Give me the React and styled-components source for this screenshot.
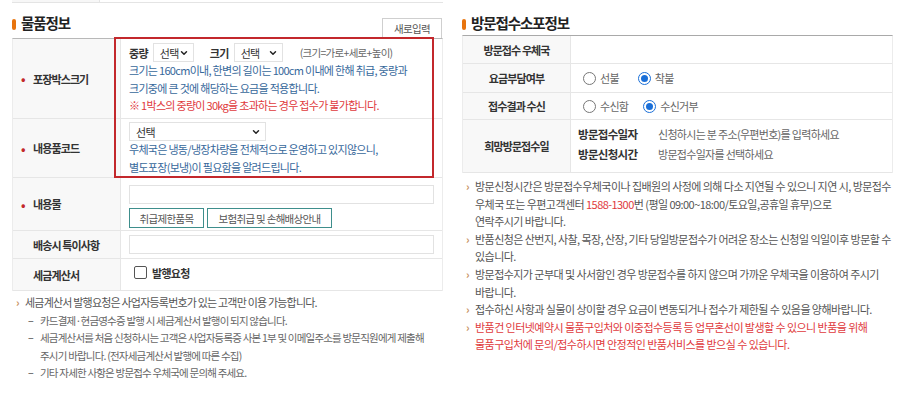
import React from "react";
import styled, { createGlobalStyle } from "styled-components";
import { ChevronDown } from "lucide-react";

const GlobalStyle = createGlobalStyle`
  body {
    margin: 0;
    background: #fff;
    font-family: "Noto Sans CJK KR", "Noto Sans", sans-serif;
    color: #444;
  }
`;

const Page = styled.div`
  width: 906px;
  height: 398px;
  box-sizing: border-box;
  padding: 0 13px 0 12px;
  display: flex;
  gap: 19px;
  overflow: hidden;
`;

const Panel = styled.section`
  width: 431px;
  display: flex;
  flex-direction: column;
`;

const PrevEdge = styled.div`
  height: 2px;
  display: grid;
  grid-template-columns: 88px 1fr;
  border-bottom: 1px solid #e4e4e4;

  span:first-child {
    background: #f7f7f7;
    border-right: 1px solid #e4e4e4;
  }
`;

const Header = styled.div`
  display: flex;
  justify-content: space-between;
  align-items: flex-end;
  margin-top: ${p => p.$top}px;
  height: ${p => p.$height}px;
`;

const Title = styled.h2`
  margin: 0;
  align-self: flex-start;
  display: flex;
  align-items: center;
  font-size: 14.5px;
  font-weight: 700;
  letter-spacing: -1.1px;
  color: #222;
  line-height: 18px;

  &::before {
    content: "";
    width: 4px;
    height: 11px;
    border-radius: 2px;
    background: #e8740e;
    margin-right: 5px;
    margin-top: 2px;
  }
`;

const ResetButton = styled.button`
  width: 60px;
  height: 20px;
  border: 1px solid #cfcfcf;
  border-bottom: none;
  background: #fff;
  font-family: inherit;
  font-size: 10.5px;
  letter-spacing: -0.6px;
  color: #555;
  padding: 0;
  margin-right: 1px;
`;

const Table = styled.div`
  position: relative;
  border-top: 1px solid ${p => p.$topColor || "#a9a9a9"};
  border-left: 1px solid #ececec;
  border-right: 1px solid #ececec;
`;

const Row = styled.div`
  display: grid;
  grid-template-columns: 108px 1fr;
  min-height: ${p => p.$h}px;
  border-bottom: 1px solid #e6e6e6;
  box-sizing: border-box;
`;

const Label = styled.div`
  background: #f8f8f8;
  border-right: 1px solid #e6e6e6;
  display: flex;
  align-items: center;
  justify-content: ${p => (p.$center ? "center" : "flex-start")};
  padding-left: ${p => (p.$center ? 0 : 20)}px;
  font-size: 11px;
  font-weight: 700;
  letter-spacing: -0.9px;
  color: #333;
  position: relative;

  &::before {
    content: ${p => (p.$required ? '"•"' : "none")};
    position: absolute;
    left: 8px;
    color: #c3282c;
    font-size: 12px;
  }
`;

const Cell = styled.div`
  padding: ${p => p.$pad || "0 8px"};
  display: flex;
  flex-direction: column;
  justify-content: ${p => p.$justify || "flex-start"};
  font-size: 11px;
  letter-spacing: -0.7px;
`;

const Highlight = styled.div`
  position: absolute;
  left: 101px;
  top: -2px;
  width: 320px;
  height: 141px;
  border: 2px solid #c3282c;
  box-sizing: border-box;
  pointer-events: none;
`;

const Inline = styled.div`
  display: flex;
  align-items: center;
  gap: ${p => p.$gap || 0}px;
  margin-top: ${p => p.$top || 0}px;
`;

const FieldName = styled.span`
  font-weight: 700;
  color: #333;
  margin: 0 5px 0 ${p => p.$left || 0}px;
`;

const SelectBox = styled.div`
  width: ${p => p.$w}px;
  height: 19px;
  box-sizing: border-box;
  border: 1px solid #e2e2e2;
  padding: 0 4px 0 6px;
  display: flex;
  align-items: center;
  justify-content: space-between;
  color: #333;
  font-size: 11px;
  background: #fff;
`;

const Hint = styled.span`
  margin-left: 17px;
  color: #666;
  font-size: 10.5px;
`;

const Text = styled.p`
  margin: 0;
  line-height: 17.5px;
  color: ${p => (p.$red ? "#e0393c" : p.$blue ? "#37689b" : "#555")};
  white-space: nowrap;
`;

const Input = styled.div`
  width: 305px;
  height: 19px;
  box-sizing: border-box;
  border: 1px solid #e2e2e2;
  background: #fff;
`;

const OutlineButton = styled.button`
  width: ${p => p.$w}px;
  height: 20px;
  padding: 0;
  border: 1px solid #3e8e8c;
  background: #fff;
  color: #555;
  font-family: inherit;
  font-size: 10.5px;
  letter-spacing: -0.7px;
`;

const Checkbox = styled.span`
  width: 11px;
  height: 11px;
  border: 1px solid #555;
  border-radius: 2px;
  margin: 0 5px;
`;

const Strong = styled.span`
  font-weight: 700;
  color: #333;
`;

const RadioWrap = styled.label`
  display: inline-flex;
  align-items: center;
  margin-right: ${p => p.$mr}px;
  color: #666;
  font-size: 11px;
`;

const RadioCircle = styled.span`
  width: 11px;
  height: 11px;
  border-radius: 50%;
  border: 1px solid ${p => (p.$on ? "#1a6fd8" : "#777")};
  margin-right: 4px;
  display: flex;
  align-items: center;
  justify-content: center;

  &::after {
    content: "";
    width: 7px;
    height: 7px;
    border-radius: 50%;
    background: ${p => (p.$on ? "#1a6fd8" : "transparent")};
  }
`;

const Radio = ({ on, mr, children }) => (
  <RadioWrap $mr={mr}>
    <RadioCircle $on={on} />
    {children}
  </RadioWrap>
);

const VisitGrid = styled.div`
  display: grid;
  grid-template-columns: 80px 1fr;
  row-gap: 2px;
  line-height: 18px;

  span:nth-child(odd) {
    font-weight: 700;
    color: #333;
    font-size: 11.5px;
  }
  span:nth-child(even) {
    color: #666;
  }
`;

const Notes = styled.ul`
  list-style: none;
  margin: ${p => p.$top}px 0 0;
  padding: 0;
  font-size: 11px;
  letter-spacing: ${p => p.$spacing || -0.8}px;
  line-height: 17.6px;
  color: #555;
`;

const Note = styled.li`
  position: relative;
  padding-left: ${p => (p.$sub ? 28 : 13)}px;
  font-size: ${p => (p.$sub ? 10.5 : 11)}px;
  color: ${p => (p.$red ? "#e0393c" : p.$sub ? "#666" : "#555")};
  white-space: nowrap;

  &::before {
    content: "${p => (p.$sub ? "–" : "›")}";
    position: absolute;
    left: ${p => (p.$sub ? 16 : 4)}px;
    color: ${p => (p.$sub ? "#777" : "#c7925d")};
    font-weight: 700;
  }
`;

const Phone = styled.span`
  color: #e0393c;
`;

const Chevron = () => <ChevronDown size={10} strokeWidth={3.5} color="#222" />;

export default function App() {
  return (
    <>
      <GlobalStyle />
      <Page>
        <Panel>
          <PrevEdge>
            <span />
            <span />
          </PrevEdge>
          <Header $top={11} $height={24}>
            <Title>물품정보</Title>
            <ResetButton>새로입력</ResetButton>
          </Header>
          <Table $topColor="#b8b8b8">
            <Row $h={80}>
              <Label $required>포장박스크기</Label>
              <Cell $pad="4px 8px 0">
                <Inline>
                  <FieldName>중량</FieldName>
                  <SelectBox $w={41}>
                    선택 <Chevron />
                  </SelectBox>
                  <FieldName $left={16}>크기</FieldName>
                  <SelectBox $w={49}>
                    선택 <Chevron />
                  </SelectBox>
                  <Hint>(크기=가로+세로+높이)</Hint>
                </Inline>
                <Text $blue>크기는 160cm이내, 한변의 길이는 100cm 이내에 한해 취급, 중량과</Text>
                <Text $blue>크기중에 큰 것에 해당하는 요금을 적용합니다.</Text>
                <Text $red>※ 1박스의 중량이 30kg을 초과하는 경우 접수가 불가합니다.</Text>
              </Cell>
            </Row>
            <Row $h={59}>
              <Label $required>내용품코드</Label>
              <Cell $pad="3px 8px 0">
                <SelectBox $w={137}>
                  선택 <Chevron />
                </SelectBox>
                <Text $blue>우체국은 냉동/냉장차량을 전체적으로 운영하고 있지않으니,</Text>
                <Text $blue>별도포장(보냉)이 필요함을 알려드립니다.</Text>
              </Cell>
            </Row>
            <Row $h={53}>
              <Label $required>내용물</Label>
              <Cell $pad="7px 8px 0">
                <Input />
                <Inline $gap={3} $top={4}>
                  <OutlineButton $w={75}>취급제한품목</OutlineButton>
                  <OutlineButton $w={125}>보험취급 및 손해배상안내</OutlineButton>
                </Inline>
              </Cell>
            </Row>
            <Row $h={28}>
              <Label>배송시 특이사항</Label>
              <Cell $justify="center">
                <Input />
              </Cell>
            </Row>
            <Row $h={32}>
              <Label>세금계산서</Label>
              <Cell $justify="center" $pad="0 8px 4px">
                <Inline>
                  <Checkbox />
                  <Strong>발행요청</Strong>
                </Inline>
              </Cell>
            </Row>
            <Highlight />
          </Table>
          <Notes $top={3}>
            <Note>세금계산서 발행요청은 사업자등록번호가 있는 고객만 이용 가능합니다.</Note>
            <Note $sub>카드결제·현금영수증 발행 시 세금계산서 발행이 되지 않습니다.</Note>
            <Note $sub>
              세금계산서를 처음 신청하시는 고객은 사업자등록증 사본 1부 및 이메일주소를 방문직원에게 제출해
              <br />
              주시기 바랍니다. (전자세금계산서 발행에 따른 수집)
            </Note>
            <Note $sub>기타 자세한 사항은 방문접수 우체국에 문의해 주세요.</Note>
          </Notes>
        </Panel>

        <Panel>
          <Header $top={14} $height={21}>
            <Title>방문접수소포정보</Title>
          </Header>
          <Table>
            <Row $h={28}>
              <Label $center>방문접수 우체국</Label>
              <Cell />
            </Row>
            <Row $h={29}>
              <Label $center>요금부담여부</Label>
              <Cell $justify="center" $pad="0 8px 0 12px">
                <Inline>
                  <Radio mr={19}>선불</Radio>
                  <Radio on mr={0}>착불</Radio>
                </Inline>
              </Cell>
            </Row>
            <Row $h={27}>
              <Label $center>접수결과 수신</Label>
              <Cell $justify="center" $pad="0 8px 0 12px">
                <Inline>
                  <Radio mr={15}>수신함</Radio>
                  <Radio on mr={0}>수신거부</Radio>
                </Inline>
              </Cell>
            </Row>
            <Row $h={53}>
              <Label $center>희망방문접수일</Label>
              <Cell $justify="center" $pad="0 8px 4px 7px">
                <VisitGrid>
                  <span>방문접수일자</span>
                  <span>신청하시는 분 주소(우편번호)를 입력하세요</span>
                  <span>방문신청시간</span>
                  <span>방문접수일자를 선택하세요</span>
                </VisitGrid>
              </Cell>
            </Row>
          </Table>
          <Notes $top={5} $spacing={-0.55}>
            <Note>
              방문신청시간은 방문접수우체국이나 집배원의 사정에 의해 다소 지연될 수 있으니 지연 시, 방문접수
              <br />
              우체국 또는 우편고객센터 <Phone>1588-1300</Phone>번 (평일 09:00~18:00/토요일,공휴일 휴무)으로
              <br />
              연락주시기 바랍니다.
            </Note>
            <Note>
              반품신청은 산번지, 사찰, 목장, 산장, 기타 당일방문접수가 어려운 장소는 신청일 익일이후 방문할 수
              <br />
              있습니다.
            </Note>
            <Note>
              방문접수지가 군부대 및 사서함인 경우 방문접수를 하지 않으며 가까운 우체국을 이용하여 주시기
              <br />
              바랍니다.
            </Note>
            <Note>접수하신 사항과 실물이 상이할 경우 요금이 변동되거나 접수가 제한될 수 있음을 양해바랍니다.</Note>
            <Note $red>
              반품건 인터넷예약시 물품구입처와 이중접수등록 등 업무혼선이 발생할 수 있으니 반품을 위해
              <br />
              물품구입처에 문의/접수하시면 안정적인 반품서비스를 받으실 수 있습니다.
            </Note>
          </Notes>
        </Panel>
      </Page>
    </>
  );
}
